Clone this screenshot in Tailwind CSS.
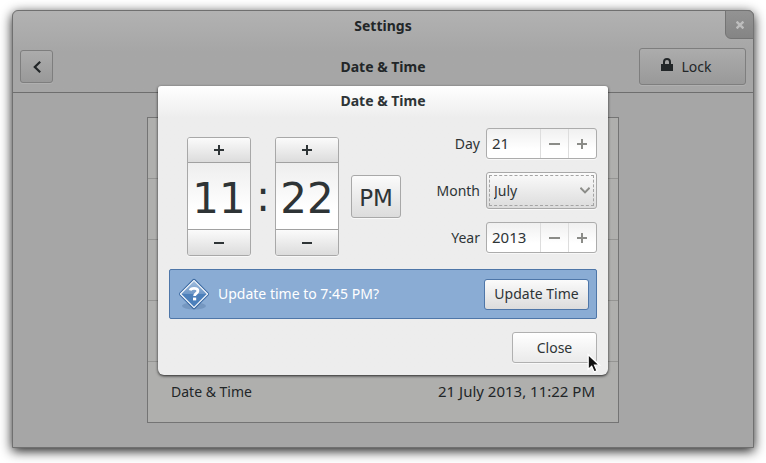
<!DOCTYPE html>
<html lang="en">

<head>
    <meta charset="UTF-8">
    <meta name="viewport" content="width=device-width, initial-scale=1.0">
    <title>Settings</title>
    <script src="https://cdn.jsdelivr.net/npm/@tailwindcss/browser@4"></script>
</head>

<body class="bg-white font-['Noto_Sans',sans-serif] text-sm text-[#2e3436]">
    <div class="flex min-h-screen px-3 pt-[10px] pb-[15px]">
        <div class="relative flex flex-1 flex-col rounded-t-md border border-[#707070] bg-[#a6a6a6] text-[#222628] shadow-[0_3px_12px_0_rgba(0,0,0,0.9)]">

            <!-- window header -->
            <header class="rounded-t-md border-b border-[#6e6e6e] bg-linear-to-b from-[#b2b2b2] to-[#a6a6a6] to-50%">
                <h1 class="py-[5px] text-center font-bold leading-5">Settings</h1>
                <button aria-label="Close window" class="absolute -top-px -right-px flex h-[29px] w-[29px] items-center justify-center rounded-tr-md rounded-bl-md border border-[#747474] bg-linear-to-b from-[#939393] to-[#858585]">
                    <svg class="h-2 w-2" viewBox="0 0 8 8" fill="none" stroke="#bdbdbd" stroke-width="2.4"><path d="M0.6 0.6 7.4 7.4M7.4 0.6 0.6 7.4" /></svg>
                </button>
                <div class="grid h-[51px] grid-cols-3 items-center px-[7px]">
                    <button aria-label="Back" class="flex h-[33px] w-[33px] items-center justify-center rounded-[3px] border border-[#7e7e7e] bg-linear-to-b from-[#acacac] to-[#999999] shadow-[0_1px_0_#b0b0b0]">
                        <svg class="h-3 w-2" viewBox="0 0 8 12" fill="none" stroke="#222628" stroke-width="2.2"><path d="M7.2 0.8 1.8 6l5.4 5.2" /></svg>
                    </button>
                    <h2 class="text-center font-bold leading-5">Date &amp; Time</h2>
                    <button class="flex h-[37px] w-[107px] items-center justify-center gap-2 justify-self-end rounded-[3px] border border-[#7e7e7e] bg-linear-to-b from-[#acacac] to-[#999999] pr-3 shadow-[0_1px_0_#b0b0b0]">
                        <svg class="-mt-1 h-[13px] w-3" viewBox="0 0 12 13" fill="#222628"><path d="M0 6h2V4a4 4 0 0 1 8 0v2h2v7H0zM4 6h4V4a2 2 0 0 0-4 0z" /></svg>
                        Lock
                    </button>
                </div>
            </header>

            <!-- settings list -->
            <main class="px-[134px] pt-6 pb-6">
                <ul class="divide-y divide-[#949492] border border-[#747474] bg-[#afafad]">
                    <li class="h-[61px]"></li>
                    <li class="h-[61px]"></li>
                    <li class="h-[61px]"></li>
                    <li class="h-[61px]"></li>
                    <li class="flex h-[60px] items-center justify-between px-[23px]">
                        <span>Date &amp; Time</span>
                        <span class="text-[15px]">21 July 2013, 11:22 PM</span>
                    </li>
                </ul>
            </main>

            <!-- dialog -->
            <div role="dialog" aria-labelledby="dialog-title" class="absolute inset-x-0 top-[75px] mx-auto w-[450px] rounded-t-[3px] rounded-b-md bg-[#ededed] bg-linear-to-b from-white to-[#ededed] to-[32px] px-[11px] pb-3 text-[#2e3436] shadow-[0_1px_3px_rgba(0,0,0,0.8)]">
                <h2 id="dialog-title" class="pt-[5px] text-center font-bold leading-5">Date &amp; Time</h2>

                <div class="flex justify-between pt-[17px]">
                    <div class="flex items-center pt-[9px] pl-[18px]">
                        <div class="flex h-[119px] w-16 flex-col overflow-hidden rounded-[3px] border border-[#a8a8a8] shadow-[0_1px_0_#f8f8f8]">
                            <button aria-label="Hour up" class="flex h-[25px] items-center justify-center border-b border-[#a1a1a1] bg-linear-to-b from-[#fbfbfb] to-[#dcdcdc]">
                                <svg class="h-[10px] w-[10px]" viewBox="0 0 10 10" fill="#2e3436"><path d="M4 0h2v4h4v2H6v4H4V6H0V4h4z" /></svg>
                            </button>
                            <input aria-label="Hour" value="11" class="min-h-0 w-full flex-1 bg-linear-to-b from-[#eeeeee] to-white to-70% pt-[5px] text-center font-['DejaVu_Sans'] text-[42px] outline-none">
                            <button aria-label="Hour down" class="flex h-[26px] items-center justify-center border-t border-[#a1a1a1] bg-linear-to-b from-[#fbfbfb] to-[#dcdcdc]">
                                <svg class="h-[10px] w-[10px]" viewBox="0 0 10 10" fill="#2e3436"><path d="M0 4h10v2H0z" /></svg>
                            </button>
                        </div>
                        <span class="w-6 text-center font-['DejaVu_Sans'] text-[42px] leading-none">:</span>
                        <div class="flex h-[119px] w-16 flex-col overflow-hidden rounded-[3px] border border-[#a8a8a8] shadow-[0_1px_0_#f8f8f8]">
                            <button aria-label="Minute up" class="flex h-[25px] items-center justify-center border-b border-[#a1a1a1] bg-linear-to-b from-[#fbfbfb] to-[#dcdcdc]">
                                <svg class="h-[10px] w-[10px]" viewBox="0 0 10 10" fill="#2e3436"><path d="M4 0h2v4h4v2H6v4H4V6H0V4h4z" /></svg>
                            </button>
                            <input aria-label="Minute" value="22" class="min-h-0 w-full flex-1 bg-linear-to-b from-[#eeeeee] to-white to-70% pt-[5px] text-center font-['DejaVu_Sans'] text-[42px] outline-none">
                            <button aria-label="Minute down" class="flex h-[26px] items-center justify-center border-t border-[#a1a1a1] bg-linear-to-b from-[#fbfbfb] to-[#dcdcdc]">
                                <svg class="h-[10px] w-[10px]" viewBox="0 0 10 10" fill="#2e3436"><path d="M0 4h10v2H0z" /></svg>
                            </button>
                        </div>
                        <button class="ml-3 h-[43px] w-[50px] rounded-[3px] border border-[#a8a8a8] bg-linear-to-b from-[#fbfbfb] to-[#dcdcdc] pt-[3px] font-['DejaVu_Sans'] text-[23px] leading-none shadow-[0_1px_0_#f8f8f8]">PM</button>
                    </div>

                    <div class="grid grid-cols-[auto_111px] items-center gap-x-[6px] gap-y-[13px] self-start">
                        <label for="day" class="text-right">Day</label>
                        <div class="flex h-[31px] overflow-hidden rounded-[3px] border border-[#acacac] bg-linear-to-b from-[#f0f0f0] to-white to-70% shadow-[0_1px_0_#f8f8f8]">
                            <input id="day" value="21" class="w-0 flex-1 pl-[5px] text-[15px] outline-none">
                            <button aria-label="Day down" class="flex w-7 items-center justify-center border-l border-[#dddddd]">
                                <svg class="h-[10px] w-3" viewBox="0 0 12 10" fill="#8b8c88"><path d="M0 4h11v2H0z" /></svg>
                            </button>
                            <button aria-label="Day up" class="flex w-7 items-center justify-center border-l border-[#dddddd]">
                                <svg class="h-[10px] w-3" viewBox="0 0 12 10" fill="#8b8c88"><path d="M4 0h2v4h4v2H6v4H4V6H0V4h4z" /></svg>
                            </button>
                        </div>

                        <label for="month" class="text-right">Month</label>
                        <div class="relative">
                            <select id="month" class="block h-[37px] w-full appearance-none rounded-[3px] border border-[#a8a8a8] bg-linear-to-b from-[#fbfbfb] to-[#dcdcdc] pl-[7px] shadow-[0_1px_0_#f8f8f8] outline-1 -outline-offset-4 outline-dashed outline-[#a4a4a4]">
                                <option>July</option>
                            </select>
                            <svg class="pointer-events-none absolute top-[15px] right-[7px] h-[7px] w-[10px]" viewBox="0 0 10 7" fill="none" stroke="#8b8c88" stroke-width="2"><path d="M0.4 0.8 5 5.4 9.6 0.8" /></svg>
                        </div>

                        <label for="year" class="text-right">Year</label>
                        <div class="flex h-[31px] overflow-hidden rounded-[3px] border border-[#acacac] bg-linear-to-b from-[#f0f0f0] to-white to-70% shadow-[0_1px_0_#f8f8f8]">
                            <input id="year" value="2013" class="w-0 flex-1 pl-[5px] text-[15px] outline-none">
                            <button aria-label="Year down" class="flex w-7 items-center justify-center border-l border-[#dddddd]">
                                <svg class="h-[10px] w-3" viewBox="0 0 12 10" fill="#8b8c88"><path d="M0 4h11v2H0z" /></svg>
                            </button>
                            <button aria-label="Year up" class="flex w-7 items-center justify-center border-l border-[#dddddd]">
                                <svg class="h-[10px] w-3" viewBox="0 0 12 10" fill="#8b8c88"><path d="M4 0h2v4h4v2H6v4H4V6H0V4h4z" /></svg>
                            </button>
                        </div>
                    </div>
                </div>

                <div class="mt-[13px] flex h-[50px] items-center rounded-[2px] border border-[#4e76a8] bg-[#8aacd4] pr-[7px] pl-2 text-white">
                    <svg class="h-8 w-8" viewBox="0 0 32 32">
                        <defs>
                            <linearGradient id="blue" x1="0" y1="0" x2="0" y2="1">
                                <stop offset="0" stop-color="#a3bfde" />
                                <stop offset="0.5" stop-color="#6f98c8" />
                                <stop offset="0.51" stop-color="#4d80ba" />
                                <stop offset="1" stop-color="#4c80bc" />
                            </linearGradient>
                        </defs>
                        <ellipse cx="16" cy="28" rx="12" ry="3.5" fill="#5c7fa8" opacity="0.45" />
                        <path d="M14.8 1.3a1.7 1.7 0 0 1 2.4 0l13.3 13.5a1.7 1.7 0 0 1 0 2.4L17.2 30.7a1.7 1.7 0 0 1-2.4 0L1.5 17.2a1.7 1.7 0 0 1 0-2.4z" fill="#30619c" />
                        <path d="M16 2.4 29.6 16 16 29.6 2.4 16z" fill="url(#blue)" stroke="#f2f6fb" stroke-width="1.3" stroke-linejoin="round" />
                        <path d="M12.2 12.4c.4-1.4 1.9-2.1 3.8-2.1 2.4 0 3.9 1 3.9 2.7 0 2.3-3.3 2.4-3.3 5" fill="none" stroke="#fff" stroke-width="2.8" />
                        <path d="M15 19.6h3.2v2.8H15z" fill="#fff" />
                    </svg>
                    <span class="flex-1 pl-2">Update time to 7:45 PM?</span>
                    <button class="h-[31px] w-[105px] rounded-[3px] border border-[#4e76a8] bg-linear-to-b from-[#fbfbfb] to-[#dcdcdc] text-[#2e3436]">Update Time</button>
                </div>

                <div class="mt-[13px] flex justify-end">
                    <div class="relative">
                        <button class="block h-[31px] w-[85px] rounded-[3px] border border-[#b0b0b0] bg-linear-to-b from-white to-[#eaeaea] shadow-[0_1px_0_#f8f8f8]">Close</button>
                        <!-- mouse pointer -->
                        <svg class="absolute top-[21px] left-[75px] h-[21px] w-[15px]" viewBox="0 0 15 21"><path d="M1.2 1.5v15l3.5-3.2 2.5 5.6 2.8-1.2-2.5-5.5h5z" fill="#111" stroke="#fff" stroke-width="1.2" /></svg>
                    </div>
                </div>
            </div>
        </div>
    </div>
</body>

</html>
